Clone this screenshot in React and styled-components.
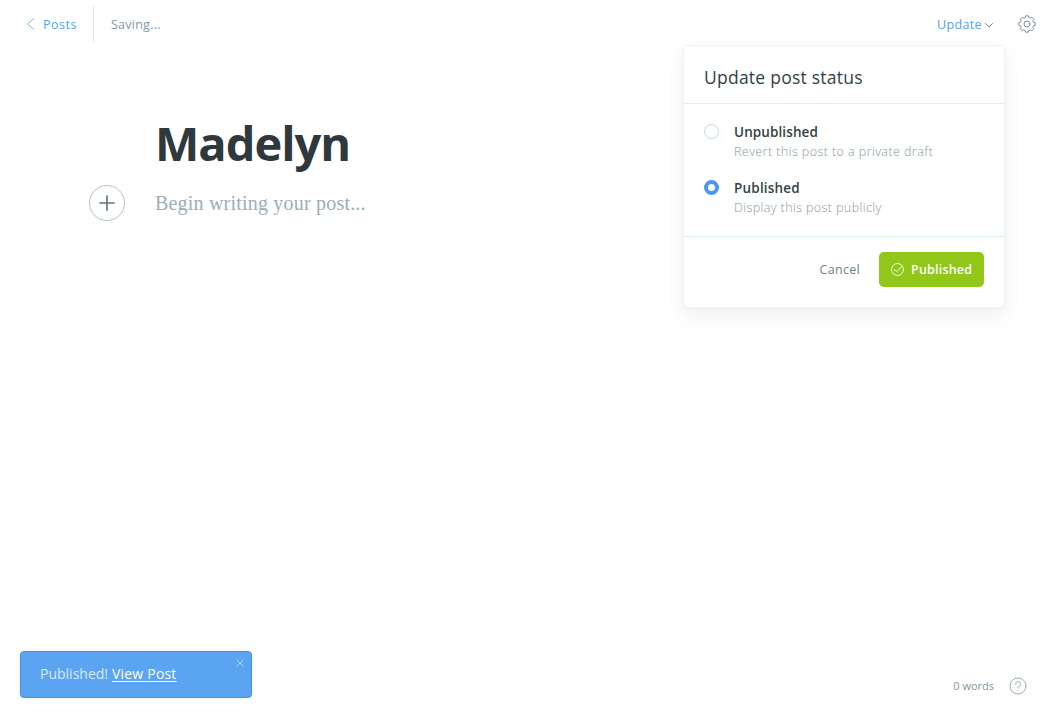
import React from 'react';
import styled, { createGlobalStyle } from 'styled-components';

const Global = createGlobalStyle`
  *, *::before, *::after { box-sizing: border-box; }
  body { margin: 0; background: #fff; font-family: "Open Sans", "Noto Sans", sans-serif; color: #343f44; }
  h1, h2, p { margin: 0; }
  button { font: inherit; background: none; border: 0; padding: 0; }
  svg { display: block; flex: none; }
`;

const Page = styled.div`
  position: relative;
  height: 718px;
  overflow: hidden;
  display: flex;
  flex-direction: column;
`;

const Text = styled.span`
  display: block;
  white-space: nowrap;
  font-size: ${p => p.$size}px;
  line-height: ${p => p.$line || 20}px;
  font-weight: ${p => p.$weight || 400};
  letter-spacing: ${p => p.$track || 0}px;
  color: ${p => p.$color};
`;

const Toolbar = styled.header`
  height: 48px;
  flex: none;
  display: flex;
  align-items: center;
  padding: 0 14px 0 26px;
`;

const ToolbarText = styled(Text)`
  padding-top: 2px;
`;

const BackLink = styled.div`
  display: flex;
  align-items: center;
  gap: 7px;
  width: 68px;
  height: 36px;
  border-right: 1px solid #dfe9f1;
`;

const SaveStatus = styled.div`
  margin-left: 17px;
`;

const ToolbarActions = styled.div`
  margin-left: auto;
  display: flex;
  align-items: center;
`;

const UpdateTrigger = styled.button`
  display: flex;
  align-items: center;
  width: 57px;
  justify-content: space-between;
  margin-right: 24px;
`;

const Chevron = styled.span`
  padding-top: 2px;
`;

const Editor = styled.main`
  flex: 1;
  padding: 65px 0 0 89px;
`;

const PostTitle = styled.h1`
  margin-left: 66px;
  height: 60px;
  line-height: 60px;
  font-size: 47px;
  font-weight: 700;
  letter-spacing: -1px;
  color: #2f383d;
`;

const PostBody = styled.div`
  display: flex;
  align-items: center;
  gap: 30px;
  margin-top: 12px;
`;

const AddButton = styled.button`
  width: 36px;
  height: 36px;
  display: flex;
  align-items: center;
  justify-content: center;
  border: 1px solid #afbfc9;
  border-radius: 50%;
`;

const Placeholder = styled.p`
  font-family: "Liberation Serif", serif;
  font-size: 20px;
  line-height: 30px;
  letter-spacing: 0.2px;
  color: #9baeb9;
`;

const Menu = styled.section`
  position: absolute;
  top: 45px;
  left: 683px;
  width: 322px;
  height: 263px;
  border: 1px solid #f0f3f5;
  border-radius: 4px;
  background: #fff;
  box-shadow: 0 8px 20px rgba(0, 0, 0, 0.07), 0 0 8px rgba(0, 0, 0, 0.015);
`;

const MenuHeader = styled.div`
  height: 58px;
  padding: 19px 20px 0;
  border-bottom: 1px solid #e2ebf1;
`;

const Options = styled.div`
  height: 133px;
  padding: 18px 20px 0;
  display: flex;
  flex-direction: column;
  gap: 16px;
  border-bottom: 1px solid #e2ebf1;
`;

const Option = styled.div`
  display: flex;
  gap: 15px;
  height: 40px;
`;

const Radio = styled.span`
  flex: none;
  width: 15px;
  height: 15px;
  margin-top: 2px;
  border-radius: 50%;
  border: ${p => (p.$checked ? '4px solid #4b98ea' : '1px solid #c3d9ed')};
  background: #fff;
`;

const MenuFooter = styled.div`
  display: flex;
  align-items: center;
  justify-content: flex-end;
  gap: 19px;
  padding: 15px 20px 0;
`;

const PublishButton = styled.button`
  width: 105px;
  height: 35px;
  display: flex;
  align-items: center;
  gap: 7px;
  padding-left: 12px;
  border-radius: 5px;
  background: #90c719;
`;

const Toast = styled.aside`
  position: absolute;
  left: 20px;
  top: 651px;
  width: 232px;
  height: 47px;
  display: flex;
  align-items: center;
  gap: 4px;
  padding: 0 7px 2px 19px;
  border: 1px solid #4391ea;
  border-radius: 4px;
  background: #5ba4f2;
  box-shadow: 0 1px 6px rgba(0, 0, 0, 0.06);
`;

const ToastLink = styled(Text)`
  text-decoration: underline;
  text-decoration-thickness: 1px;
  text-underline-offset: 2px;
`;

const ToastClose = styled.button`
  margin: 7px 0 0 auto;
  align-self: flex-start;
`;

const StatusBar = styled.footer`
  height: 64px;
  flex: none;
  display: flex;
  align-items: center;
  justify-content: flex-end;
  gap: 15px;
  padding-right: 23px;
`;

const Stroke = styled.svg.attrs({ fill: 'none', strokeLinecap: 'round', strokeLinejoin: 'round' })`
  stroke: ${p => p.$color};
  stroke-width: ${p => p.$width || 1};
`;

const gearPath = (() => {
  const points = [];
  for (let i = 0; i < 8; i += 1) {
    const centre = (i * Math.PI) / 4;
    [[-0.27, 6.7], [-0.18, 8.3], [0.18, 8.3], [0.27, 6.7]].forEach(([offset, radius]) => {
      const a = centre + offset;
      points.push(`${(9 + radius * Math.sin(a)).toFixed(2)} ${(9 - radius * Math.cos(a)).toFixed(2)}`);
    });
  }
  return `M${points.join('L')}Z`;
})();

export default function App() {
  return (
    <Page>
      <Global />
      <Toolbar>
        <BackLink>
          <Stroke width="10" height="14" viewBox="0 0 10 14" $color="#84bef6"><path d="M8 1.5 1.5 7 8 12.5" /></Stroke>
          <ToolbarText $size={12.5} $track={0.5} $color="#4fa3f1">Posts</ToolbarText>
        </BackLink>
        <SaveStatus><ToolbarText $size={12.5} $track={0.25} $color="#8496a2">Saving...</ToolbarText></SaveStatus>
        <ToolbarActions>
          <UpdateTrigger>
            <ToolbarText $size={12.5} $track={0.35} $color="#4fa3f1">Update</ToolbarText>
            <Chevron>
              <Stroke width="10" height="8" viewBox="0 0 10 8" $color="#74879a"><path d="M1.5 2.5 5 6 8.5 2.5" /></Stroke>
            </Chevron>
          </UpdateTrigger>
          <Stroke width="18" height="18" viewBox="0 0 18 18" $color="#7d909c">
            <path d={gearPath} /><circle cx="9" cy="9" r="3" />
          </Stroke>
        </ToolbarActions>
      </Toolbar>
      <Editor>
        <PostTitle>Madelyn</PostTitle>
        <PostBody>
          <AddButton aria-label="Add card">
            <Stroke width="16" height="16" viewBox="0 0 16 16" $color="#66777f" $width={1.7}><path d="M8 1v14M1 8h14" /></Stroke>
          </AddButton>
          <Placeholder>Begin writing your post...</Placeholder>
        </PostBody>
      </Editor>
      <StatusBar>
        <Text $size={11} $color="#8295a2">0 words</Text>
        <Stroke width="18" height="18" viewBox="0 0 18 18" $color="#9aadb9">
          <circle cx="9" cy="9" r="8" /><path d="M6.5 7.1a2.5 2.5 0 1 1 3.5 2.3c-.8.4-1 .8-1 1.6" /><path d="M9 13.2v.2" />
        </Stroke>
      </StatusBar>
      <Menu>
        <MenuHeader><Text as="h2" $size={17.5} $line={24} $track={0.24} $color="#343f44">Update post status</Text></MenuHeader>
        <Options>
          <Option>
            <Radio />
            <div>
              <Text $size={13.5} $weight={600} $track={0.1} $color="#343f44">Unpublished</Text>
              <Text $size={12.5} $weight={300} $track={0.43} $color="#8797a2">Revert this post to a private draft</Text>
            </div>
          </Option>
          <Option>
            <Radio $checked />
            <div>
              <Text $size={13.5} $weight={600} $track={0.2} $color="#343f44">Published</Text>
              <Text $size={12.5} $weight={300} $track={0.4} $color="#8797a2">Display this post publicly</Text>
            </div>
          </Option>
        </Options>
        <MenuFooter>
          <Text $size={12.5} $track={0.3} $color="#6f808a">Cancel</Text>
          <PublishButton>
            <Stroke width="13" height="13" viewBox="0 0 13 13" $color="#f4fae8" $width={1}>
              <circle cx="6.5" cy="6.5" r="6" /><path d="m3.3 6.4 2.3 2.3 5-4.9" />
            </Stroke>
            <Text $size={12.5} $weight={600} $track={0.2} $color="#fff">Published</Text>
          </PublishButton>
        </MenuFooter>
      </Menu>
      <Toast>
        <Text $size={14} $color="#d6eafd">Published!</Text>
        <ToastLink $size={14} $track={0.2} $color="#fff">View Post</ToastLink>
        <ToastClose aria-label="Dismiss">
          <Stroke width="8" height="8" viewBox="0 0 8 8" $color="#b4d7fa"><path d="m.7.7 6.6 6.6M7.3.7.7 7.3" /></Stroke>
        </ToastClose>
      </Toast>
    </Page>
  );
}
